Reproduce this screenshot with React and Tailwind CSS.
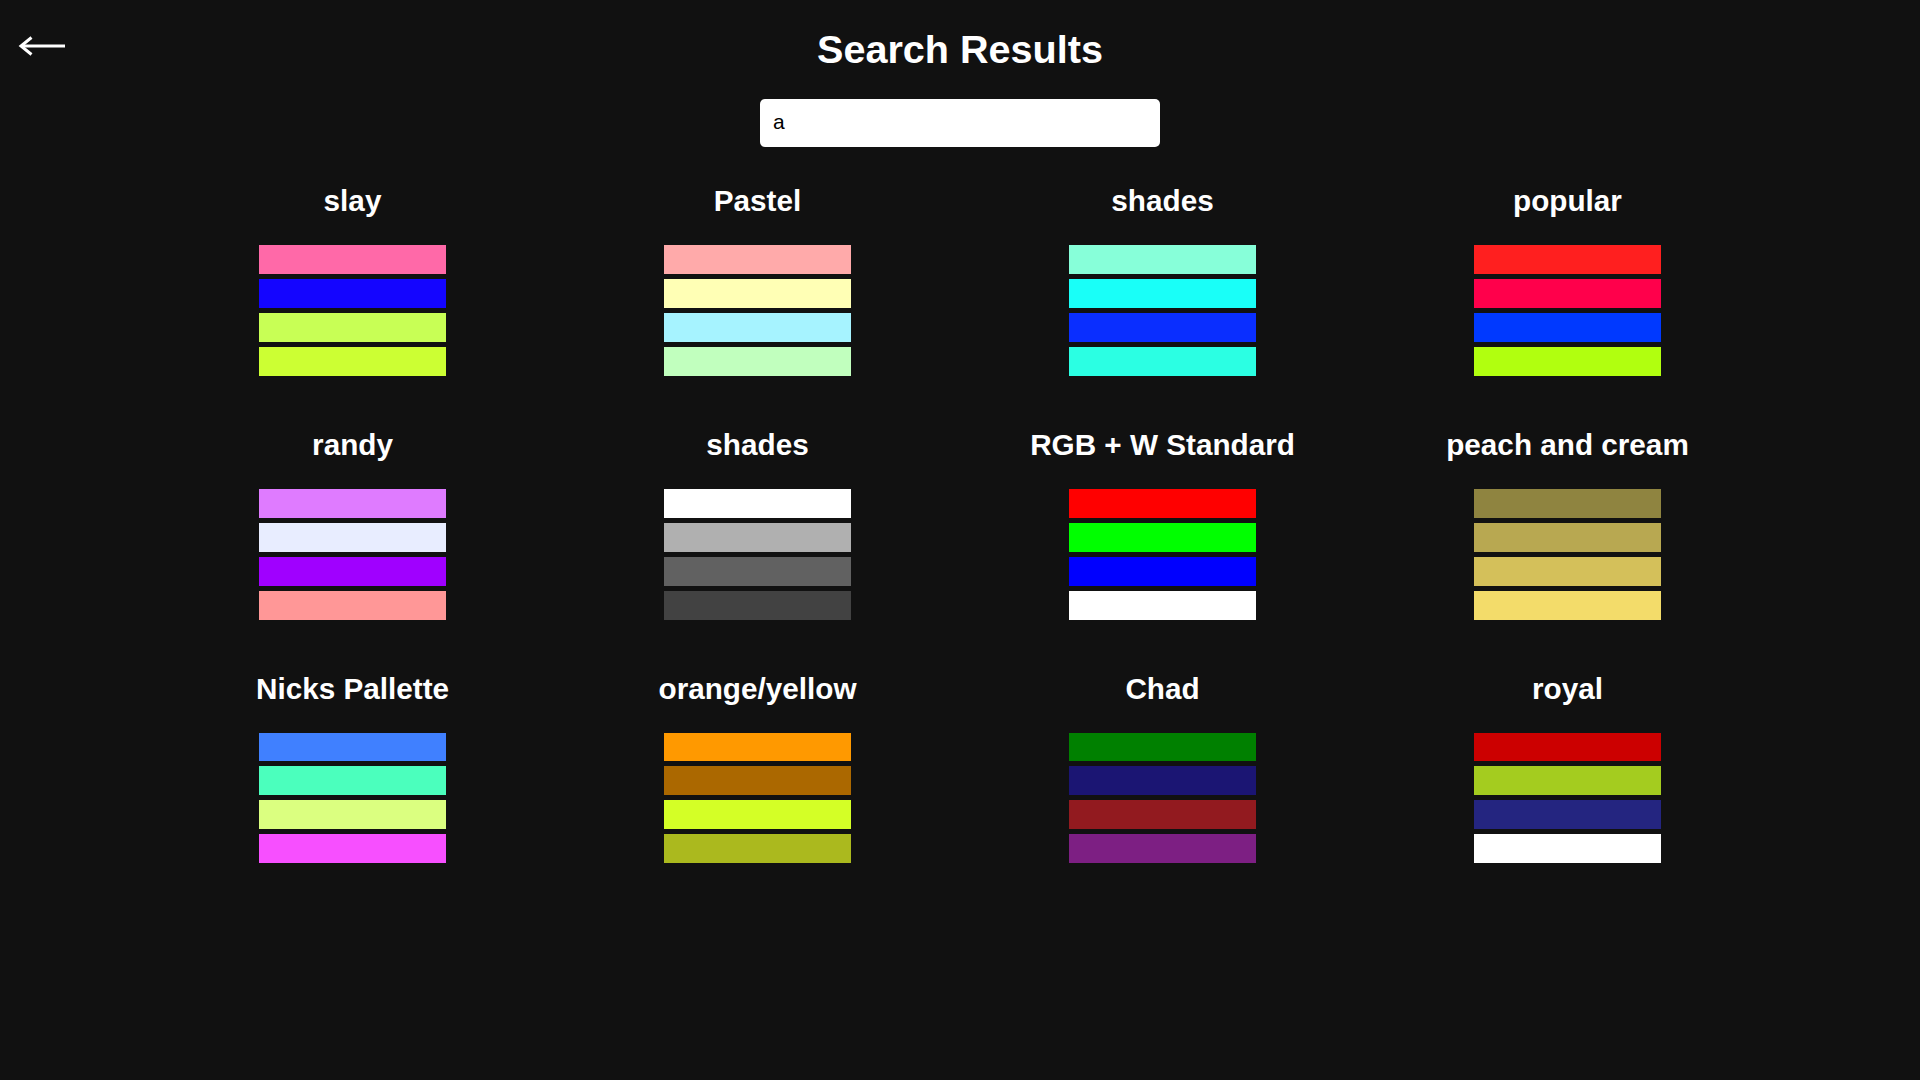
import { useState } from 'react';

const PALETTES = [
  { name: 'slay', colors: ['#ff69a8', '#1405ff', '#c8ff55', '#ccff33'] },
  { name: 'Pastel', colors: ['#ffaaaa', '#ffffb5', '#a6f3ff', '#c1ffbe'] },
  { name: 'shades', colors: ['#87ffd9', '#19fff8', '#0a2eff', '#2bffe3'] },
  { name: 'popular', colors: ['#ff1f1f', '#ff004b', '#0039ff', '#b1ff0f'] },
  { name: 'randy', colors: ['#df7bff', '#e8edff', '#a000ff', '#ff9797'] },
  { name: 'shades', colors: ['#ffffff', '#b0b0b0', '#616161', '#424242'] },
  { name: 'RGB + W Standard', colors: ['#ff0000', '#00ff00', '#0000ff', '#ffffff'] },
  { name: 'peach and cream', colors: ['#8f8440', '#b8a851', '#d4c05a', '#f3dc6a'] },
  { name: 'Nicks Pallette', colors: ['#4080ff', '#4bffbd', '#dbff80', '#f74fff'] },
  { name: 'orange/yellow', colors: ['#ff9900', '#ab6800', '#d4ff26', '#abb91e'] },
  { name: 'Chad', colors: ['#008000', '#1b1573', '#921a1f', '#7d1f83'] },
  { name: 'royal', colors: ['#cc0000', '#a4cc1f', '#242580', '#ffffff'] },
];

function BackArrow() {
  return (
    <svg width="50" height="22" viewBox="0 0 50 22" fill="none">
      <path d="M4 11 H48" stroke="white" strokeWidth="3" />
      <path d="M14.5 2.5 L4 11 L14.5 19.5" stroke="white" strokeWidth="3" strokeLinejoin="miter" />
    </svg>
  );
}

function PaletteCard({ palette }) {
  return (
    <div className="flex flex-col items-center">
      <h3 className="text-white font-bold text-[29.7px] leading-[34px] mb-[27px]">{palette.name}</h3>
      <div className="flex flex-col gap-[5.2px] w-[187px]">
        {palette.colors.map((c, i) => (
          <div key={i} className="h-[28.8px] w-full" style={{ backgroundColor: c }} />
        ))}
      </div>
    </div>
  );
}

export default function App() {
  const [query, setQuery] = useState('a');

  return (
    <div className="min-h-screen bg-[#111111] font-['Liberation_Sans',Arial,sans-serif]">
      <div className="relative flex flex-col items-center pt-[27px]">
        <button className="absolute left-[17px] top-[35px]" aria-label="Back">
          <BackArrow />
        </button>
        <h1 className="text-white font-bold text-[39.6px] leading-[45.5px]">Search Results</h1>
        <input
          value={query}
          onChange={(e) => setQuery(e.target.value)}
          className="mt-[26.5px] w-[400px] h-[48px] bg-white rounded-[5px] pl-[13px] pb-[2px] text-[21px] text-black outline-none"
        />
      </div>

      <div className="grid grid-cols-4 w-[1620px] mx-auto mt-[37px] gap-y-[52px]">
        {PALETTES.map((p, i) => (
          <PaletteCard key={i} palette={p} />
        ))}
      </div>
    </div>
  );
}
